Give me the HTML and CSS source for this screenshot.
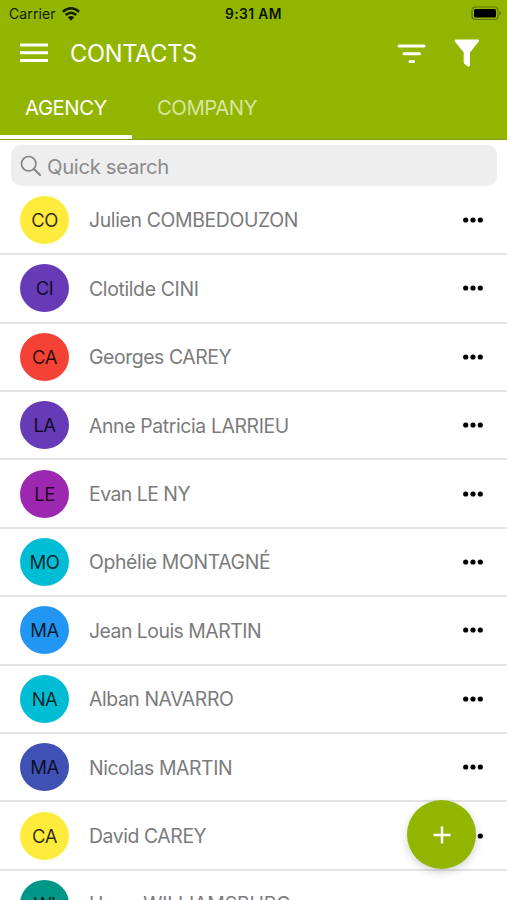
FILE: index.html
```html
<!DOCTYPE html>
<html lang="en">
<head>
<meta charset="utf-8">
<title>Contacts</title>
<link rel="stylesheet" href="styles.css">
</head>
<body>
<div class="app">
  <header class="header">
    <div class="status">
      <div class="carrier"><span>Carrier</span>
        <svg width="18" height="14" viewBox="0 0 18 14"><g fill="none" stroke="#111b00" stroke-width="2.5"><path d="M.9 4.7Q9-2.1 17.1 4.7"/><path d="M3.7 8Q9 3.6 14.3 8"/></g><path d="M5.8 10.3Q9 7.8 12.2 10.3L9 13.7z" fill="#111b00"/></svg>
      </div>
      <div class="time">9:31 AM</div>
      <svg class="battery" width="31" height="15" viewBox="0 0 31 15"><rect x="1" y="1" width="26" height="12.5" rx="3.5" fill="none" stroke="#5c7600" stroke-width="1.2"/><rect x="3" y="3" width="22" height="8.5" rx="1.5"/><path d="M28.4 5v4.5q3-2.2 0-4.5" fill="#5c7600"/></svg>
    </div>
    <div class="toolbar">
      <svg class="menu" width="28" height="20" viewBox="0 0 28 20" fill="#fff"><path d="M0 .5h28v3H0zM0 8.3h28v3H0zM0 16h28v3H0z"/></svg>
      <h1 class="title">CONTACTS</h1>
      <svg class="sort" width="29" height="20" viewBox="0 0 29 20" fill="none" stroke="#fff" stroke-width="3" stroke-linecap="round"><path d="M2 2h25M7 9.7h15.500M13 17.400h3.500"/></svg>
      <svg class="funnel" width="26" height="29" viewBox="0 0 26 29" fill="#fff"><path d="M1.5.5h22.700q1.400.6.6 2L16 13.500V26q-.6 2.500-2.700 1.200L10.500 24.800q-.8-.6-.8-1.700v-9.600L.8 2.500Q.2 1.300 1.500.5z"/></svg>
    </div>
    <nav class="tabs">
      <div class="tab tab-active"><span class="agency">AGENCY</span></div>
      <div class="tab"><span class="company">COMPANY</span></div>
    </nav>
  </header>
  <div class="search">
    <svg width="22" height="22" viewBox="0 0 22 22" fill="none" stroke="#858587" stroke-width="1.7" stroke-linecap="round"><circle cx="8.700" cy="8.700" r="7.200"/><path d="M14 14l6 6" stroke-width="2.100"/></svg>
    <span>Quick search</span>
  </div>
  <main class="list">
    <div class="row"><div class="avatar yellow">CO</div><div class="name n1">Julien COMBEDOUZON</div><svg class="more" viewBox="0 0 20 6"><circle cx="2.700" cy="3" r="2.600"/><circle cx="10" cy="3" r="2.600"/><circle cx="17.300" cy="3" r="2.600"/></svg></div>
    <div class="row"><div class="avatar violet">CI</div><div class="name n2">Clotilde CINI</div><svg class="more" viewBox="0 0 20 6"><circle cx="2.700" cy="3" r="2.600"/><circle cx="10" cy="3" r="2.600"/><circle cx="17.300" cy="3" r="2.600"/></svg></div>
    <div class="row"><div class="avatar red">CA</div><div class="name n3">Georges CAREY</div><svg class="more" viewBox="0 0 20 6"><circle cx="2.700" cy="3" r="2.600"/><circle cx="10" cy="3" r="2.600"/><circle cx="17.300" cy="3" r="2.600"/></svg></div>
    <div class="row"><div class="avatar violet">LA</div><div class="name n4">Anne Patricia LARRIEU</div><svg class="more" viewBox="0 0 20 6"><circle cx="2.700" cy="3" r="2.600"/><circle cx="10" cy="3" r="2.600"/><circle cx="17.300" cy="3" r="2.600"/></svg></div>
    <div class="row"><div class="avatar purple">LE</div><div class="name n5">Evan LE NY</div><svg class="more" viewBox="0 0 20 6"><circle cx="2.700" cy="3" r="2.600"/><circle cx="10" cy="3" r="2.600"/><circle cx="17.300" cy="3" r="2.600"/></svg></div>
    <div class="row"><div class="avatar cyan">MO</div><div class="name n6">Ophélie MONTAGNÉ</div><svg class="more" viewBox="0 0 20 6"><circle cx="2.700" cy="3" r="2.600"/><circle cx="10" cy="3" r="2.600"/><circle cx="17.300" cy="3" r="2.600"/></svg></div>
    <div class="row"><div class="avatar blue">MA</div><div class="name n7">Jean Louis MARTIN</div><svg class="more" viewBox="0 0 20 6"><circle cx="2.700" cy="3" r="2.600"/><circle cx="10" cy="3" r="2.600"/><circle cx="17.300" cy="3" r="2.600"/></svg></div>
    <div class="row"><div class="avatar cyan">NA</div><div class="name n8">Alban NAVARRO</div><svg class="more" viewBox="0 0 20 6"><circle cx="2.700" cy="3" r="2.600"/><circle cx="10" cy="3" r="2.600"/><circle cx="17.300" cy="3" r="2.600"/></svg></div>
    <div class="row"><div class="avatar indigo">MA</div><div class="name n9">Nicolas MARTIN</div><svg class="more" viewBox="0 0 20 6"><circle cx="2.700" cy="3" r="2.600"/><circle cx="10" cy="3" r="2.600"/><circle cx="17.300" cy="3" r="2.600"/></svg></div>
    <div class="row"><div class="avatar yellow">CA</div><div class="name n10">David CAREY</div><svg class="more" viewBox="0 0 20 6"><circle cx="2.700" cy="3" r="2.600"/><circle cx="10" cy="3" r="2.600"/><circle cx="17.300" cy="3" r="2.600"/></svg></div>
    <div class="row"><div class="avatar teal">WI</div><div class="name n11">Hugo WILLIAMSBURG</div></div>
  </main>
  <div class="fab"><svg width="18" height="18" viewBox="0 0 18 18" stroke="#fff" stroke-width="2.500"><path d="M9 .5v17M.5 9h17"/></svg></div>
</div>
</body>
</html>
```
FILE: styles.css
```css
* { box-sizing: border-box; }
body { margin: 0; background: #fff; font-family: Inter, "Liberation Sans", sans-serif; }
.app { position: relative; height: 900px; overflow: hidden; }
svg { display: block; flex: none; }
.header { height: 140px; background: #92b600; border-bottom: 1px solid #829e20; }
.status { display: grid; grid-template-columns: 1fr auto 1fr; height: 27px; padding: 0 6px 0 9px; align-items: center; color: #111b00; }
.carrier { display: flex; align-items: center; gap: 6px; font-size: 14px; letter-spacing: .1px; }
.time { font-size: 13.800px; font-weight: 600; color: #0b1200; letter-spacing: .4px; margin-right: 3px; }
.battery { justify-self: end; margin-right: -1px; margin-top: -1px; }
.toolbar { display: flex; height: 52px; align-items: center; padding: 0 27px 0 20px; color: #fff; }
.title { margin: 1px 0 0 22px; font-size: 23.600px; line-height: 30px; font-weight: 400; letter-spacing: -.3px; flex: 1; }
.sort { margin-top: 1px; }
.funnel { margin-left: 28px; }
.tabs { display: flex; height: 60px; }
.tab { width: 132px; height: 60px; padding-top: 16px; text-align: center; font-size: 20.300px; line-height: 26px; letter-spacing: -.45px; color: #d8e5a3; }
.tab + .tab { width: 150px; }
.tab-active { color: #fff; border-bottom: 4px solid #fff; }
.search { display: flex; align-items: center; gap: 5px; height: 41px; margin: 5px 10px 0 11px; padding-left: 9px; padding-top: 1px; border-radius: 10px; background: #eee; color: #8b8b8d; font-size: 20.300px; letter-spacing: -.33px; }
.list { padding-top: .8px; }
.row { display: flex; align-items: center; height: 68.400px; padding: 0 24px 0 20px; border-bottom: 2px solid #e4e4e6; }
.avatar { display: flex; align-items: center; justify-content: center; width: 49px; height: 48px; border-radius: 50%; font-size: 18.500px; color: rgba(0,0,0,.82); letter-spacing: -.5px; flex: none; }
.name { flex: 1; margin-left: 20px; padding-top: 1px; font-size: 19.400px; color: #7b7b7b; white-space: nowrap; }
.n1, .n2, .n6 { letter-spacing: -.35px; }
.n4 { letter-spacing: -.37px; }
.n3, .n8, .n9, .n10 { letter-spacing: -.42px; }
.n5, .n7 { letter-spacing: -.5px; }
.n11 { letter-spacing: -.13px; }
.more { width: 20px; height: 6px; }
.yellow { background: #ffeb3b; }
.violet { background: #673ab7; }
.red { background: #f44336; }
.purple { background: #9c27b0; }
.cyan { background: #00bcd4; }
.blue { background: #2196f3; }
.indigo { background: #3f51b5; }
.teal { background: #009688; }
.fab { position: absolute; left: 407px; top: 800px; width: 69px; height: 69px; border-radius: 50%; background: #92b600; display: flex; align-items: center; justify-content: center; box-shadow: 0 3px 10px rgba(0,0,0,.18); }
```
